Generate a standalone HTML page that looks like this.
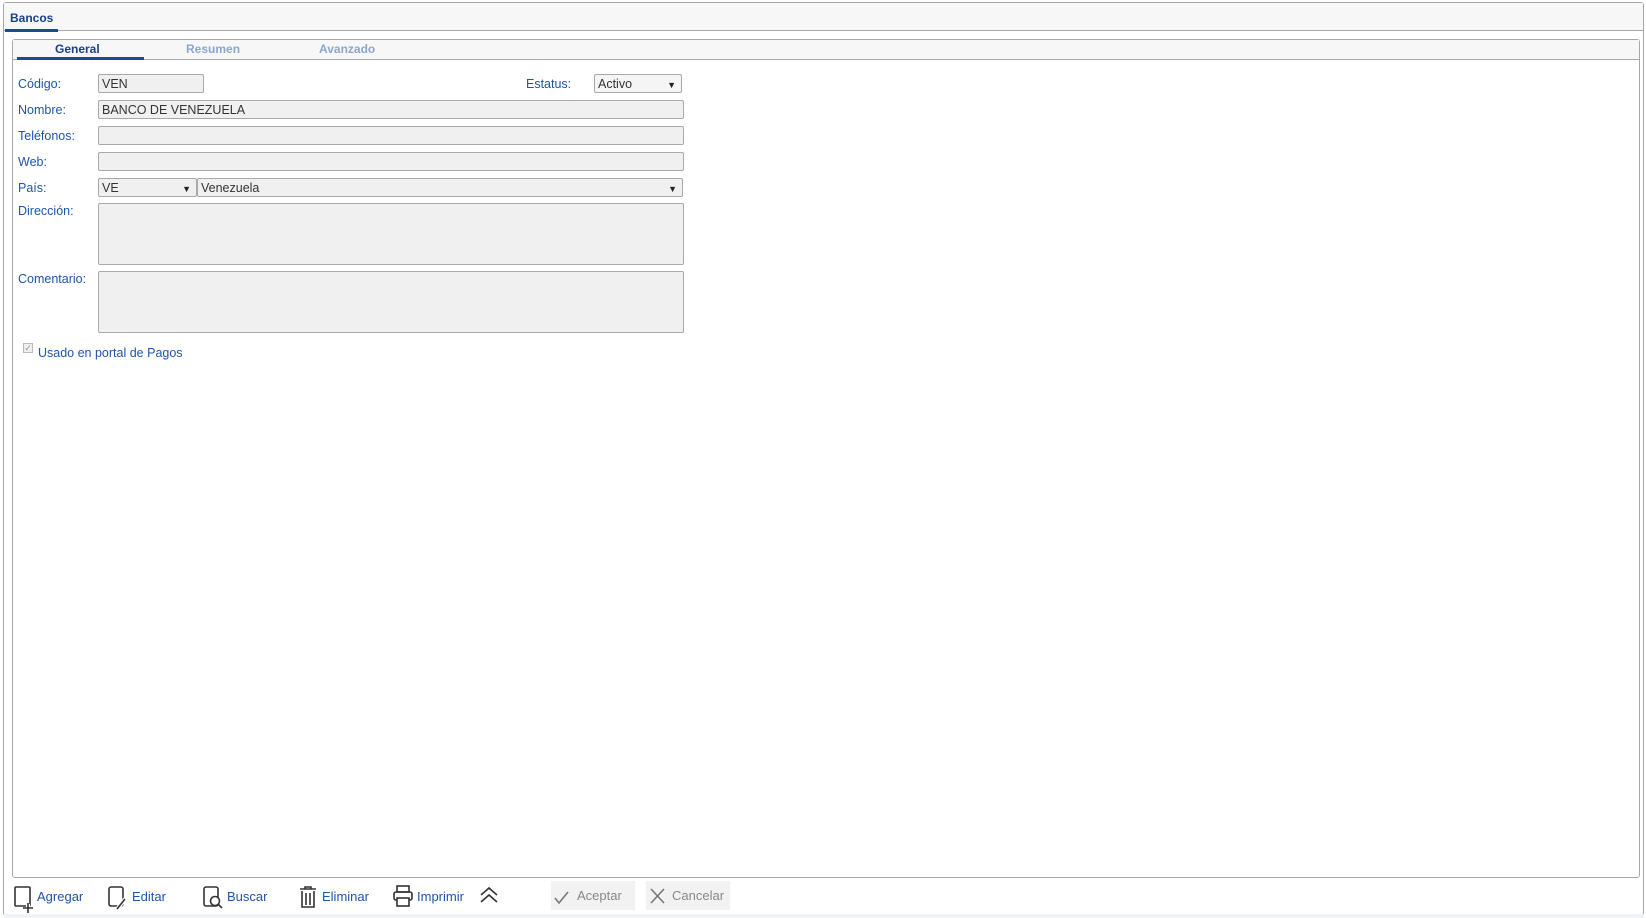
<!DOCTYPE html>
<html><head><meta charset="utf-8"><style>
*{box-sizing:border-box;margin:0;padding:0}
body{width:1646px;height:918px;background:#fff;font-family:"Liberation Sans",sans-serif;font-size:12px;position:relative;overflow:hidden}
.a{position:absolute}
.lbl{position:absolute;left:18px;color:#1f55a8;font-size:12.5px}
.inp{position:absolute;background:#f0f0f0;border:1px solid #a9a9a9;border-radius:2px;font-size:12.5px;color:#333;padding:2px 3px;line-height:14px}
.arr{position:absolute;right:5px;top:3px;font-size:9px;color:#222}
.tb{position:absolute;top:889px;color:#1f55a8;font-size:13px}
.btn{position:absolute;top:881px;height:29px;background:#f2f2f2;color:#888;font-size:13px;line-height:29px}
</style></head><body>
<div class="a" style="left:3px;top:2px;width:1641px;height:914px;border:1px solid #a8a8a8;border-radius:3px;background:#fff"></div>
<div class="a" style="left:4px;top:3px;width:1639px;height:28px;background:#f7f7f7;border-bottom:1px solid #a8a8a8"></div>
<div class="a" style="left:10px;top:11px;font-weight:bold;color:#1b3f8b;font-size:12px">Bancos</div>
<div class="a" style="left:5px;top:29px;width:53px;height:3px;background:#1b4a9c"></div>

<div class="a" style="left:12px;top:39px;width:1628px;height:839px;border:1px solid #a8a8a8;border-radius:3px;background:#fff"></div>
<div class="a" style="left:13px;top:40px;width:1626px;height:20px;background:#f7f7f7;border-bottom:1px solid #a8a8a8"></div>
<div class="a" style="left:55px;top:42px;font-weight:bold;color:#1b3f8b">General</div>
<div class="a" style="left:186px;top:42px;font-weight:bold;color:#8da6cc">Resumen</div>
<div class="a" style="left:319px;top:42px;font-weight:bold;color:#8da6cc">Avanzado</div>
<div class="a" style="left:17px;top:57px;width:127px;height:3px;background:#1b4a9c"></div>

<div class="lbl" style="top:77px">Código:</div>
<div class="inp" style="left:98px;top:74px;width:106px;height:19px">VEN</div>
<div class="lbl" style="left:526px;top:77px">Estatus:</div>
<div class="inp" style="left:594px;top:74px;width:88px;height:19px;background:#f5f5f5">Activo<span class="arr">▼</span></div>
<div class="lbl" style="top:103px">Nombre:</div>
<div class="inp" style="left:98px;top:100px;width:586px;height:19px">BANCO DE VENEZUELA</div>
<div class="lbl" style="top:129px">Teléfonos:</div>
<div class="inp" style="left:98px;top:126px;width:586px;height:19px"></div>
<div class="lbl" style="top:155px">Web:</div>
<div class="inp" style="left:98px;top:152px;width:586px;height:19px"></div>
<div class="lbl" style="top:181px">País:</div>
<div class="inp" style="left:98px;top:178px;width:99px;height:19px">VE<span class="arr">▼</span></div>
<div class="inp" style="left:197px;top:178px;width:486px;height:19px">Venezuela<span class="arr">▼</span></div>
<div class="lbl" style="top:204px">Dirección:</div>
<div class="inp" style="left:98px;top:203px;width:586px;height:62px"></div>
<div class="lbl" style="top:272px">Comentario:</div>
<div class="inp" style="left:98px;top:271px;width:586px;height:62px"></div>
<div class="a" style="left:23px;top:343px;width:10px;height:10px;border:1px solid #bbb;background:#eee;font-size:9px;line-height:8px;color:#999;text-align:center">✓</div>
<div class="lbl" style="left:38px;top:346px">Usado en portal de Pagos</div>

<svg class="a" style="left:0;top:0" width="1646" height="918" fill="none" stroke="#333" stroke-width="1.6">
<rect x="15" y="887" width="15" height="19" rx="1"/><path d="M28 904v9M24 909h9" stroke="#fff" stroke-width="4"/><path d="M28 903v10M23 908h10"/>
<rect x="109" y="887" width="14" height="19" rx="2"/><path d="M118 908l7-9" stroke="#fff" stroke-width="4"/><path d="M117 909l8-10"/>
<rect x="204" y="887" width="14" height="19" rx="2"/><circle cx="215" cy="901" r="4.5" fill="#fff"/><path d="M218 904l4 4"/>
<path d="M300 889h16M305 889v-2h6v2M302 891v16h12v-16M306 893v12M310 893v12"/>
<rect x="397" y="886" width="12" height="6"/><rect x="394" y="892" width="18" height="8" rx="2"/><rect x="397" y="898" width="12" height="8" fill="#fff"/>
<path d="M481 895l8-7 8 7M481 902l8-7 8 7"/>
</svg>
<div class="tb" style="left:37px">Agregar</div>
<div class="tb" style="left:132px">Editar</div>
<div class="tb" style="left:227px">Buscar</div>
<div class="tb" style="left:322px">Eliminar</div>
<div class="tb" style="left:417px">Imprimir</div>
<div class="btn" style="left:551px;width:84px;padding-left:26px">Aceptar</div>
<div class="btn" style="left:646px;width:84px;padding-left:26px">Cancelar</div>
<svg class="a" style="left:0;top:0" width="1646" height="918" fill="none" stroke="#777" stroke-width="1.6">
<path d="M555 898l4 5 9-11"/><path d="M651 889l13 14M664 889l-13 14"/></svg>
<div class="a" style="left:4px;top:914px;width:1640px;height:4px;background:#f0f2f5"></div>
</body></html>
